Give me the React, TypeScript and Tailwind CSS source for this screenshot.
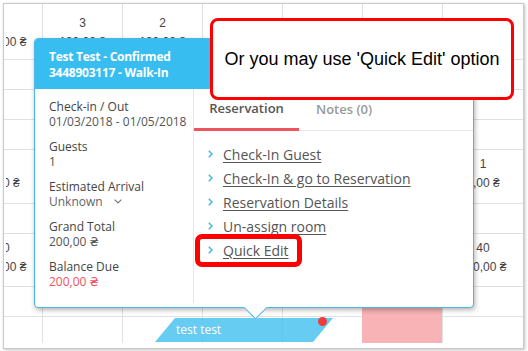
type Cell = { n?: string; p?: string };
type Row = { h: string; pt: string; cells: Record<number, Cell>; last?: boolean };

const rows: Row[] = [
  {
    h: "h-[56px]",
    pt: "pt-[10px]",
    cells: { 0: { p: "100,00 ₴" }, 1: { n: "3", p: "100,00 ₴" }, 2: { n: "2", p: "100,00 ₴" } },
  },
  { h: "h-[30px]", pt: "", cells: {} },
  { h: "h-[30px]", pt: "", cells: {} },
  { h: "h-[30px]", pt: "", cells: {} },
  { h: "h-[54px]", pt: "pt-[5px]", cells: { 0: { p: "0,00 ₴" }, 6: { n: "1", p: "0,00 ₴" } } },
  { h: "h-[30px]", pt: "", cells: {} },
  { h: "h-[53px]", pt: "pt-[5px]", cells: { 0: { n: "10", p: "100,00 ₴" }, 6: { n: "40", p: "100,00 ₴" } } },
  { h: "h-[30px]", pt: "", cells: {} },
  { h: "h-[26px]", pt: "", cells: {}, last: true },
];

const details = [
  { label: "Check-in / Out", value: "01/03/2018 - 01/05/2018" },
  { label: "Guests", value: "1" },
  { label: "Estimated Arrival", value: "Unknown", select: true },
  { label: "Grand Total", value: "200,00 ₴" },
  { label: "Balance Due", value: "200,00 ₴", due: true },
];

const links = ["Check-In Guest", "Check-In & go to Reservation", "Reservation Details", "Un-assign room", "Quick Edit"];

function CellText({ c }: { c?: Cell }) {
  if (!c) return null;
  return (
    <div className="flex flex-col items-center leading-[19px]">
      <span>{c.n || "\u00a0"}</span>
      <span>{c.p}</span>
    </div>
  );
}

function Grid() {
  return (
    <div className="ml-[3px] mt-[3px] h-[346px] w-[521px] border border-[#c9c9c9] bg-white font-['Liberation_Sans',Arial,sans-serif] text-[12px] text-[#444] shadow-[1px_1px_3px_rgba(0,0,0,0.25)]">
      {rows.map((r, i) => (
        <div key={i} className={`flex ${r.h} ${r.last ? "" : "border-b border-[#e0e0e0]"}`}>
          <div className="h-full w-[39px] border-r border-[#e0e0e0]">
            <div className="ml-[2px] h-full w-[36px] overflow-hidden">
              <div className={`-ml-[43px] w-[80px] ${r.pt}`}>
                <CellText c={r.cells[0]} />
              </div>
            </div>
          </div>
          {[1, 2, 3, 4, 5, 6].map((c) => (
            <div key={c} className={`h-full w-[80px] ${c < 6 ? "border-r border-[#e0e0e0]" : ""} ${r.pt}`}>
              <CellText c={r.cells[c]} />
            </div>
          ))}
        </div>
      ))}
    </div>
  );
}

function Popover() {
  return (
    <div className="absolute left-[34px] top-[38px] flex h-[270px] w-[440px] flex-col rounded-[4px] border border-[#4fb6e3] bg-white font-['Open_Sans','DejaVu_Sans',sans-serif] shadow-[1px_2px_5px_rgba(0,0,0,0.3)]">
      <div className="h-[50px] rounded-t-[3px] bg-[#37bdf0] px-[14px] pt-[10px] text-[12px] font-bold leading-4 tracking-[-0.25px] text-white">
        <div>Test Test - Confirmed</div>
        <div>3448903117 - Walk-In</div>
      </div>
      <div className="flex flex-1 pb-[4px]">
        <div className="w-[159px] border-r border-[#e6e6e6] pl-[14px] pt-[10px] text-[12px] leading-[15px]">
          {details.map((d) => (
            <div key={d.label} className="mb-[10px]">
              <div className="text-[#444]">{d.label}</div>
              <div className={`flex items-center ${d.due ? "text-[#f2525c]" : d.select ? "text-[#666]" : "text-[#555]"}`}>
                {d.value}
                {d.select && (
                  <svg className="ml-[11px]" width="8" height="5" viewBox="0 0 8 5">
                    <polyline points="0.7,0.7 4,4 7.3,0.7" fill="none" stroke="#777" strokeWidth="1.2" />
                  </svg>
                )}
              </div>
            </div>
          ))}
        </div>
        <div className="flex-1">
          <div className="flex h-[42px] border-b border-[#e6e6e6] text-[13px] font-semibold">
            <div className="-mb-px flex w-[105px] items-center justify-center border-b-[3px] border-[#f0545e] text-[#555]">
              Reservation
            </div>
            <div className="flex items-center pl-[17px] text-[#999]">Notes (0)</div>
          </div>
          <div className="pl-[14px] pt-[11px] text-[14px] text-[#555]">
            {links.map((l) => (
              <div key={l} className="relative flex h-6 items-center">
                <svg width="5" height="8" viewBox="0 0 5 8">
                  <polyline points="0.8,0.8 4,4 0.8,7.2" fill="none" stroke="#3db4e6" strokeWidth="1.4" />
                </svg>
                <span className="ml-[10px] underline decoration-1 underline-offset-2">{l}</span>
                {l === "Quick Edit" && (
                  <div className="absolute -left-[13px] -top-[4px] h-[33px] w-[107px] rounded-[7px] border-[5px] border-[#ff0000]" />
                )}
              </div>
            ))}
          </div>
        </div>
      </div>
      <div className="absolute -bottom-[9px] left-[212px] h-[17px] w-[17px] rotate-45 border-b border-r border-[#4fb6e3] bg-white" />
    </div>
  );
}

export default function App() {
  return (
    <div className="relative h-[351px] w-[528px] overflow-hidden bg-white">
      <Grid />
      <div className="absolute left-[362px] top-[287px] h-[56px] w-[80px] bg-[#f7b3b5]" />
      <div className="absolute left-[155px] top-[318px] h-[24px] w-[178px] bg-[#4bc3f0]/85 pl-[21px] font-['Open_Sans',sans-serif] text-[12px] leading-[24px] text-white [clip-path:polygon(20px_0,100%_0,calc(100%-20px)_100%,0_100%)]">
        test test
      </div>
      <div className="absolute left-[318px] top-[317px] h-[9px] w-[9px] rounded-full bg-[#f03c3c]" />
      <Popover />
      <div className="absolute left-[210px] top-[18px] flex h-[82px] w-[304px] items-center justify-center rounded-[8px] border-[3px] border-[#ff0000] bg-white pt-px font-['Liberation_Sans',Arial,sans-serif] text-[18px] text-black">
        Or you may use 'Quick Edit' option
      </div>
    </div>
  );
}
